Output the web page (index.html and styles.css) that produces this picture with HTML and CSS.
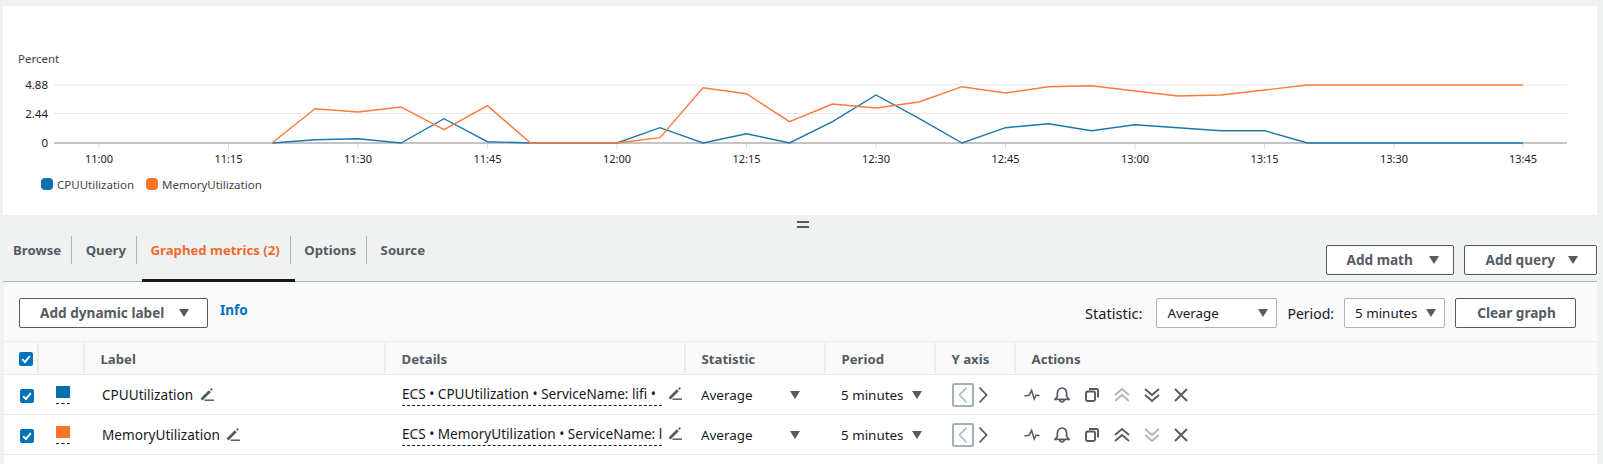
FILE: index.html
```html
<!DOCTYPE html>
<html lang="en">
<head>
    <meta charset="UTF-8">
    <title>Graphed metrics</title>
    <link rel="stylesheet" href="styles.css">
</head>
<body>
    <svg width="0" height="0" class="defs">
        <symbol id="i-pencil" viewBox="0 0 14 14"><path d="M1.500 12.500 9.800 4.200" fill="none" stroke="#545b64" stroke-width="2.800"/><path d="M10.800 1.700l1.400 1.400" fill="none" stroke="#545b64" stroke-width="2"/><path d="M4.500 13.200H14" stroke="#545b64" stroke-width="1.500"/></symbol>
        <symbol id="i-check" viewBox="0 0 14 14"><path d="M3.200 7.200 6 10l4.800-5.800" fill="none" stroke="#fff" stroke-width="2"/></symbol>
        <symbol id="i-left" viewBox="0 0 10 18"><path d="M8.500 1.500 1.500 9l7 7.500" fill="none" stroke="currentColor" stroke-width="1.500"/></symbol>
        <symbol id="i-right" viewBox="0 0 10 18"><path d="M1.500 1.500l7 7.500-7 7.500" fill="none" stroke="currentColor" stroke-width="1.800"/></symbol>
        <symbol id="i-spark" viewBox="0 0 16 16"><path d="M0.500 9 5 8.300 7.600 3.300 10.200 12l2-4 3.300.7" fill="none" stroke="currentColor" stroke-width="1.500"/></symbol>
        <symbol id="i-bell" viewBox="0 0 16 16"><path d="M1 12.300h14L12.600 9.500V6.500C12.600 3.500 11 1 8 1S3.400 3.500 3.400 6.500V9.500zM5.800 12.500c0 3.300 4.400 3.300 4.400 0" fill="none" stroke="currentColor" stroke-width="1.700"/></symbol>
        <symbol id="i-copy" viewBox="0 0 14 14"><rect x="1" y="3.500" width="9" height="9.500" rx="1.500" fill="none" stroke="currentColor" stroke-width="1.900"/><path d="M4 1h8a1 1 0 0 1 1 1v7.500" fill="none" stroke="currentColor" stroke-width="1.900"/></symbol>
        <symbol id="i-up" viewBox="0 0 16 14"><path d="M1 7l7-6 7 6M1 13l7-6 7 6" fill="none" stroke="currentColor" stroke-width="1.900"/></symbol>
        <symbol id="i-down" viewBox="0 0 16 14"><path d="M1 1l7 6 7-6M1 7l7 6 7-6" fill="none" stroke="currentColor" stroke-width="1.900"/></symbol>
        <symbol id="i-x" viewBox="0 0 14 14"><path d="M1 1l12 12M13 1 1 13" fill="none" stroke="currentColor" stroke-width="1.900"/></symbol>
    </svg>

    <div class="chart-card">
        <svg class="chart" width="1594" height="209" viewBox="3 6 1594 209">
            <text x="18" y="63" class="axis-title">Percent</text>
            <line x1="54" x2="1567" y1="85" y2="85" class="grid"/>
            <line x1="54" x2="1567" y1="113.500" y2="113.500" class="grid"/>
            <text x="48" y="89" class="y-tick">4.88</text>
            <text x="48" y="118" class="y-tick">2.44</text>
            <text x="48" y="147" class="y-tick">0</text>

            <g class="tick-marks">
                <line x1="99" x2="99" y1="143" y2="149"/>
                <line x1="228.500" x2="228.500" y1="143" y2="149"/>
                <line x1="358" x2="358" y1="143" y2="149"/>
                <line x1="487.500" x2="487.500" y1="143" y2="149"/>
                <line x1="617" x2="617" y1="143" y2="149"/>
                <line x1="746.500" x2="746.500" y1="143" y2="149"/>
                <line x1="876" x2="876" y1="143" y2="149"/>
                <line x1="1005.500" x2="1005.500" y1="143" y2="149"/>
                <line x1="1135" x2="1135" y1="143" y2="149"/>
                <line x1="1264.500" x2="1264.500" y1="143" y2="149"/>
                <line x1="1394" x2="1394" y1="143" y2="149"/>
                <line x1="1523" x2="1523" y1="143" y2="149"/>
            </g>
            <g class="x-labels">
                <text x="99" y="163">11:00</text>
                <text x="228.500" y="163">11:15</text>
                <text x="358" y="163">11:30</text>
                <text x="487.500" y="163">11:45</text>
                <text x="617" y="163">12:00</text>
                <text x="746.500" y="163">12:15</text>
                <text x="876" y="163">12:30</text>
                <text x="1005.500" y="163">12:45</text>
                <text x="1135" y="163">13:00</text>
                <text x="1264.500" y="163">13:15</text>
                <text x="1394" y="163">13:30</text>
                <text x="1523" y="163">13:45</text>
            </g>
            <line x1="54" x2="1567" y1="143" y2="143" class="baseline"/>

            <polyline class="series cpu" points="272,143 315,139.700 358,138.700 401,143 444,118.700 487.500,141.700 530.500,143 573.500,143 617,143 660,127.700 703,143 746.500,133.700 789.500,143 832.500,121.700 876,95 919,118.300 962,143 1005.500,127.700 1048.500,123.700 1091.500,130.700 1135,124.700 1178,127.700 1221,130.700 1264.500,130.700 1307.500,143 1523,143"/>
            <polyline class="series mem" points="272,143 315,108.700 358,112 401,107 444,129.700 487.500,105.700 530.500,143 573.500,143 617,143 660,137.700 703,87.700 746.500,93.700 789.500,121.700 832.500,104 876,108 919,102 962,86.700 1005.500,93 1048.500,86.700 1091.500,85.700 1135,91 1178,96 1221,95 1264.500,90 1307.500,85 1523,85"/>

            <rect x="41" y="178" width="12" height="12" rx="4" fill="#0971ae"/>
            <text x="57" y="189" class="legend">CPUUtilization</text>
            <rect x="146" y="178" width="12" height="12" rx="4" fill="#ff7427"/>
            <text x="162" y="189" class="legend">MemoryUtilization</text>
        </svg>
    </div>

    <div class="splitter"><span class="handle"></span></div>

    <div class="tab-row">
        <div class="tabs">
            <a class="tab"><span>Browse</span></a>
            <a class="tab"><span>Query</span></a>
            <a class="tab active"><span>Graphed metrics (2)</span></a>
            <a class="tab"><span>Options</span></a>
            <a class="tab last"><span>Source</span></a>
        </div>
        <div class="tab-actions">
            <button class="btn btn-math">Add math <i class="caret"></i></button>
            <button class="btn btn-query">Add query <i class="caret"></i></button>
        </div>
    </div>

    <div class="panel">
        <div class="toolbar">
            <button class="btn btn-dynamic">Add dynamic label <i class="caret"></i></button>
            <a class="info">Info</a>
            <div class="toolbar-right">
                <label class="field-label stat-label">Statistic:</label>
                <div class="select select-stat"><span>Average</span><i class="caret"></i></div>
                <label class="field-label">Period:</label>
                <div class="select select-period"><span>5 minutes</span><i class="caret"></i></div>
                <button class="btn btn-clear">Clear graph</button>
            </div>
        </div>

        <table class="metrics">
            <colgroup>
                <col class="c-check"><col class="c-color"><col class="c-label"><col class="c-details">
                <col class="c-stat"><col class="c-period"><col class="c-axis"><col>
            </colgroup>
            <thead>
                <tr>
                    <th><span class="cell-head first"><svg class="check"><use href="#i-check"/></svg></span></th>
                    <th><span class="cell-head"></span></th>
                    <th><span class="cell-head">Label</span></th>
                    <th><span class="cell-head">Details</span></th>
                    <th><span class="cell-head">Statistic</span></th>
                    <th><span class="cell-head">Period</span></th>
                    <th><span class="cell-head">Y axis</span></th>
                    <th><span class="cell-head last">Actions</span></th>
                </tr>
            </thead>
            <tbody>
                <tr>
                    <td class="td-check"><svg class="check"><use href="#i-check"/></svg></td>
                    <td class="td-color"><span class="swatch blue"></span></td>
                    <td class="td-label">CPUUtilization <svg class="pencil"><use href="#i-pencil"/></svg></td>
                    <td class="td-details"><span class="details">ECS • CPUUtilization • ServiceName: lifi •</span><svg class="pencil"><use href="#i-pencil"/></svg></td>
                    <td><div class="cell-select stat"><span>Average</span><i class="caret"></i></div></td>
                    <td><div class="cell-select period"><span>5 minutes</span><i class="caret"></i></div></td>
                    <td><div class="axis"><span class="axis-left"><svg class="chev"><use href="#i-left"/></svg></span><svg class="chev"><use href="#i-right"/></svg></div></td>
                    <td>
                        <div class="actions">
                            <svg class="a-spark"><use href="#i-spark"/></svg>
                            <svg class="a-bell"><use href="#i-bell"/></svg>
                            <svg class="a-copy"><use href="#i-copy"/></svg>
                            <svg class="a-move off"><use href="#i-up"/></svg>
                            <svg class="a-move"><use href="#i-down"/></svg>
                            <svg class="a-x"><use href="#i-x"/></svg>
                        </div>
                    </td>
                </tr>
                <tr>
                    <td class="td-check"><svg class="check"><use href="#i-check"/></svg></td>
                    <td class="td-color"><span class="swatch orange"></span></td>
                    <td class="td-label">MemoryUtilization <svg class="pencil"><use href="#i-pencil"/></svg></td>
                    <td class="td-details"><span class="details">ECS • MemoryUtilization • ServiceName: lifi</span><svg class="pencil"><use href="#i-pencil"/></svg></td>
                    <td><div class="cell-select stat"><span>Average</span><i class="caret"></i></div></td>
                    <td><div class="cell-select period"><span>5 minutes</span><i class="caret"></i></div></td>
                    <td><div class="axis"><span class="axis-left"><svg class="chev"><use href="#i-left"/></svg></span><svg class="chev"><use href="#i-right"/></svg></div></td>
                    <td>
                        <div class="actions">
                            <svg class="a-spark"><use href="#i-spark"/></svg>
                            <svg class="a-bell"><use href="#i-bell"/></svg>
                            <svg class="a-copy"><use href="#i-copy"/></svg>
                            <svg class="a-move"><use href="#i-up"/></svg>
                            <svg class="a-move off"><use href="#i-down"/></svg>
                            <svg class="a-x"><use href="#i-x"/></svg>
                        </div>
                    </td>
                </tr>
            </tbody>
        </table>
    </div>
</body>
</html>
```

FILE: styles.css
```css
body {
    margin: 0;
    height: 464px;
    overflow: hidden;
    background-color: #f0f2f2;
    font-family: "Noto Sans", sans-serif;
    font-size: 13.6px;
    color: #16191f;
}

.defs {
    position: absolute;
}

.chart-card {
    width: 1594px;
    height: 209px;
    margin: 6px 0 0 3px;
    background-color: #fff;
}

.chart {
    display: block;
}

.axis-title,
.legend {
    font-size: 11.5px;
    fill: #444;
}

.y-tick {
    font-size: 11.5px;
    text-anchor: end;
    fill: #222;
}

.x-labels text {
    font-size: 11px;
    text-anchor: middle;
    fill: #222;
}

.grid {
    stroke: #e9e9e9;
    stroke-width: 1;
}

.tick-marks line {
    stroke: #ddd;
}

.baseline {
    stroke: #c4c4c4;
    stroke-width: 2;
}

.series {
    fill: none;
    stroke-width: 1.4;
    stroke-linejoin: miter;
}

.cpu {
    stroke: #1a78ae;
}

.mem {
    stroke: #ff7a3a;
}

.splitter {
    height: 17px;
    display: flex;
    justify-content: center;
    padding-left: 3px;
}

.handle {
    width: 12px;
    height: 3px;
    margin-top: 6px;
    border-top: 2px solid #545b64;
    border-bottom: 2px solid #545b64;
}

.tab-row {
    height: 49px;
    margin-left: 3px;
    width: 1594px;
    display: flex;
    justify-content: space-between;
    border-bottom: 1px solid #aab7b8;
}

.tabs {
    display: flex;
    align-items: flex-start;
    padding-top: 4px;
}

.tab {
    position: relative;
    height: 45px;
    font-weight: 700;
    font-size: 13.2px;
    color: #545b64;
}

.tab span {
    display: block;
    line-height: 28px;
    padding: 0 10px 0 13.5px;
    border-right: 1px solid #aab7b8;
}

.tab:first-child span {
    padding-left: 10px;
}

.tab.last span {
    border-right: none;
}

.tab.active {
    color: #f26a2e;
}

.tab.active::after {
    content: "";
    position: absolute;
    left: 5px;
    right: -4px;
    bottom: -1px;
    height: 3px;
    background-color: #16191f;
}

.tab-actions {
    display: flex;
    gap: 10px;
    padding-top: 13px;
}

.btn {
    height: 30px;
    padding: 0 0 2px 2px;
    background-color: #fff;
    border: 1px solid #545b64;
    border-radius: 2px;
    font-family: "Noto Sans", sans-serif;
    font-weight: 700;
    font-size: 13.6px;
    color: #545b64;
}

.btn .caret {
    margin-left: 11px;
    vertical-align: 1px;
}

.btn-math {
    width: 128px;
    padding-left: 6px;
}

.btn-math .caret {
    margin-left: 13px;
}

.btn-query {
    width: 133px;
}

.btn-query .caret {
    margin-left: 9px;
}

.btn-dynamic {
    width: 189px;
}

.btn-clear {
    width: 121px;
}

.caret {
    display: inline-block;
    width: 0;
    height: 0;
    border-left: 5.5px solid transparent;
    border-right: 5.5px solid transparent;
    border-top: 8px solid #545b64;
}

.panel {
    margin-left: 4px;
    width: 1593px;
    height: 182px;
    background-color: #fff;
}

.toolbar {
    height: 60px;
    box-sizing: border-box;
    padding: 16px 21px 0 15px;
    display: flex;
    align-items: flex-start;
    background-color: #fafafa;
    border-bottom: 1px solid #eaeded;
}

.info {
    margin: 3px 0 0 12px;
    font-weight: 700;
    font-size: 13.5px;
    color: #0073bb;
}

.toolbar-right {
    margin-left: auto;
    display: flex;
    align-items: center;
    gap: 10px;
}

.field-label {
    font-size: 14px;
    color: #16191f;
}

.stat-label {
    font-size: 14.6px;
    margin-right: 4px;
}

.select {
    height: 30px;
    box-sizing: border-box;
    padding: 0 8px 0 10px;
    display: flex;
    align-items: center;
    justify-content: space-between;
    background-color: #fff;
    border: 1px solid #aab7b8;
    border-radius: 2px;
    font-size: 13.4px;
    white-space: nowrap;
    color: #16191f;
}

.select-stat {
    width: 121px;
}

.select-period {
    width: 101px;
}

.metrics {
    width: 100%;
    table-layout: fixed;
    border-collapse: collapse;
}

.c-check { width: 35px; }
.c-color { width: 46px; }
.c-label { width: 301px; }
.c-details { width: 300px; }
.c-stat { width: 140px; }
.c-period { width: 110px; }
.c-axis { width: 80px; }

th {
    height: 32px;
    padding: 0;
    background-color: #fafafa;
    border-bottom: 1px solid #eaeded;
    text-align: left;
    font-size: 13.2px;
    font-weight: 700;
    color: #545b64;
}

.cell-head {
    display: flex;
    align-items: center;
    height: 30px;
    padding: 2px 0 0 15.5px;
    box-sizing: border-box;
    border-right: 2px solid #eaeded;
}

.cell-head.first {
    padding-left: 15px;
}

.cell-head.last {
    border-right: none;
}

td {
    height: 39px;
    padding: 0;
    border-bottom: 1px solid #eaeded;
    white-space: nowrap;
}

.check {
    display: block;
    width: 14px;
    height: 14px;
    background-color: #0073bb;
    border-radius: 2px;
}

.td-check .check {
    margin-left: 16px;
    margin-top: 3px;
}

.swatch {
    display: block;
    width: 14px;
    height: 12px;
    margin: 0 0 0 17px;
    padding-bottom: 5px;
    background-clip: content-box;
    border-bottom: 1px dashed #16191f;
}

.swatch.blue {
    background-color: #0971ae;
}

.swatch.orange {
    background-color: #ff7427;
}

.td-label {
    padding-left: 17px;
}

.pencil {
    width: 14px;
    height: 14px;
    vertical-align: -1px;
}

.td-label .pencil {
    margin-left: 3px;
}

.td-details {
    padding-left: 16px;
}

.td-details > * {
    vertical-align: middle;
}

.details {
    display: inline-block;
    width: 260px;
    overflow: hidden;
    padding-bottom: 2px;
    border-bottom: 1px dashed #16191f;
    color: #16191f;
}

.td-details .pencil {
    margin-left: 6px;
    margin-top: -3px;
}

.cell-select {
    display: flex;
    align-items: center;
    justify-content: space-between;
    margin-left: 15px;
    font-size: 13.4px;
}

.cell-select.stat {
    width: 99px;
}

.cell-select.period {
    width: 81px;
}

.axis {
    display: flex;
    align-items: center;
    gap: 4px;
    margin-left: 16px;
    color: #545b64;
}

.axis-left {
    display: flex;
    align-items: center;
    justify-content: center;
    width: 22px;
    height: 24px;
    box-sizing: border-box;
    border: 2px solid #9fb3b5;
    border-radius: 2px;
    color: #aab7b8;
}

.chev {
    display: block;
    width: 10px;
    height: 18px;
}

.actions {
    display: flex;
    align-items: center;
    margin-left: 8px;
    color: #545b64;
}

.actions svg {
    display: block;
    height: 16px;
    flex: none;
}

.a-spark { width: 16px; margin-right: 14px; }
.a-bell { width: 16px; margin-right: 15px; }
.a-copy { width: 14px; height: 14px !important; margin-right: 15px; }
.a-move { width: 16px; height: 14px !important; margin-right: 14px; }
.a-x { width: 14px; height: 14px !important; }

.off {
    color: #aab7b8;
}
```
